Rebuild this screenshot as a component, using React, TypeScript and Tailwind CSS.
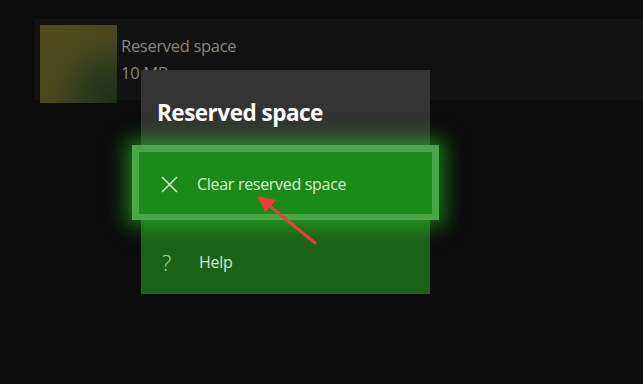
import React from "react";

export default function App() {
  return (
    <div
      className="relative w-[643px] h-[384px] overflow-hidden bg-[#0c0c0c]"
      style={{ fontFamily: '"Open Sans", "Noto Sans", sans-serif' }}
    >
      {/* background list row */}
      <div className="mt-[19px] ml-[34px] h-[81px] bg-[#121212] flex items-start pt-[6px] pl-[6px]">
        <div className="w-[77px] h-[78px] shrink-0 bg-[radial-gradient(ellipse_at_100%_100%,#1f2e1a_0%,#2e3a1e_30%,#44461c_55%,#4f4c1b_80%)]" />
        <div className="ml-[4px] pt-[7px] flex flex-col text-[16.5px] leading-[27px] text-[#85877c] tracking-[-0.3px]">
          <span>Reserved space</span>
          <span>10 MB</span>
        </div>
      </div>

      {/* dialog */}
      <div className="absolute left-[141px] top-[70px] w-[289px] flex flex-col">
        <div className="h-[75px] pl-[16px] pt-[28px] bg-[linear-gradient(to_bottom,#343434_0%,#333333_70%,#2f3a2d_100%)]">
          <span className="text-white font-bold text-[22.5px] leading-[30px] tracking-[-0.5px]">
            Reserved space
          </span>
        </div>
        <div className="relative -mx-[9px] h-[75px] border-[7px] border-b-[6px] border-[#4aa646] bg-[#1a8a1a] shadow-[0_0_18px_6px_rgba(40,200,40,0.55)] flex items-center pl-[22px] pt-[2px] z-10">
          <svg width="17" height="17" viewBox="0 0 17 17" className="shrink-0">
            <path d="M1 1 L16 16 M16 1 L1 16" stroke="#d3ecc8" strokeWidth="1.6" fill="none" />
          </svg>
          <span className="ml-[19px] text-[16px] text-[#dbeed2] tracking-[-0.3px]">
            Clear reserved space
          </span>
        </div>
        <div className="h-[74px] bg-[#1d6219] flex items-center pl-[21px] pt-[10px]">
          <span className="w-[14px] text-[22px] text-[#a6e09a] leading-none" style={{ fontWeight: 300 }}>?</span>
          <span className="ml-[23px] text-[16px] text-[#d6e9cf] tracking-[-0.3px]">Help</span>
        </div>
      </div>

      {/* red arrow annotation */}
      <svg className="absolute left-0 top-0 z-20 pointer-events-none" width="643" height="384">
        <line x1="315" y1="243" x2="266" y2="203" stroke="#ee3b3b" strokeWidth="3" strokeLinecap="round" />
        <polygon points="257,196 276,200 265,212" fill="#ee3b3b" />
      </svg>
    </div>
  );
}
